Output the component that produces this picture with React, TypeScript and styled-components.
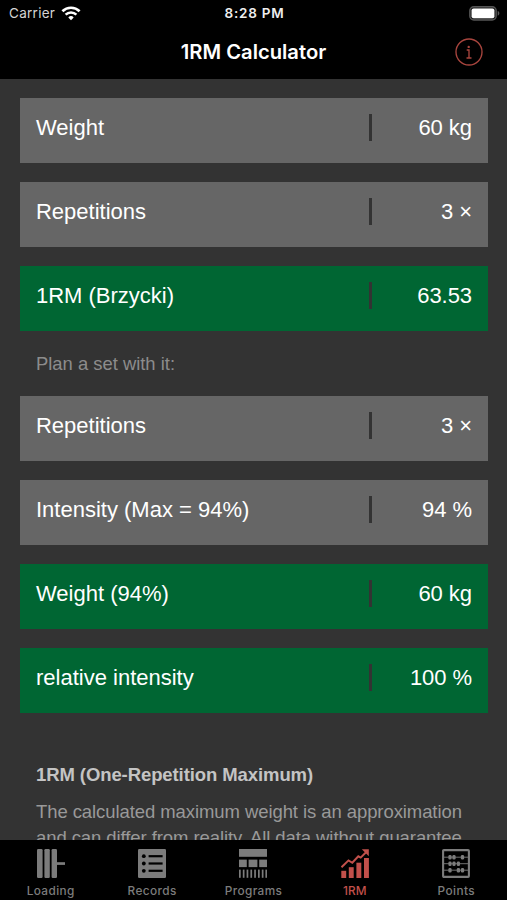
import React from "react";
import styled, { createGlobalStyle } from "styled-components";

const GlobalStyle = createGlobalStyle`
  * { box-sizing: border-box; }
  body { margin: 0; background: #000; }
`;

const Screen = styled.div`
  width: 507px;
  height: 900px;
  display: flex;
  flex-direction: column;
  overflow: hidden;
  background: #333;
  color: #fff;
  font-family: "Liberation Sans", Arial, sans-serif;
`;

const Header = styled.header`
  flex: none;
  height: 79px;
  background: #000;
  font-family: Inter, sans-serif;
`;

const StatusBar = styled.div`
  height: 27px;
  padding: 0 7px 0 9px;
  display: grid;
  grid-template-columns: 1fr auto 1fr;
  align-items: center;
  font-size: 13px;
  line-height: 27px;
`;

const Carrier = styled.div`
  display: flex;
  align-items: center;
  gap: 6px;
  color: #d4d4d4;
  font-size: 13.5px;
  letter-spacing: 0.28px;
`;

const Clock = styled.div`
  font-size: 13.5px;
  font-weight: 600;
  letter-spacing: 0.75px;
  color: #eee;
`;

const BatterySlot = styled.div`
  display: flex;
  justify-content: flex-end;
`;

const NavBar = styled.div`
  height: 50px;
  padding-right: 24px;
  display: grid;
  grid-template-columns: 52px 1fr 28px;
  align-items: center;
`;

const Title = styled.h1`
  margin: 0;
  text-align: center;
  font-size: 20.2px;
  font-weight: 600;
  line-height: 50px;
  letter-spacing: 0;
`;

const InfoButton = styled.button`
  padding: 0;
  border: 0;
  background: none;
  display: flex;
`;

const Content = styled.main`
  flex: 1;
  min-height: 0;
  overflow: hidden;
  padding: 18.6px 18.6px 0 19.6px;
`;

const Rows = styled.section`
  display: flex;
  flex-direction: column;
  gap: 18.7px;
`;

const Row = styled.div<{ $result?: boolean }>`
  height: 65.3px;
  padding: 16px 16.4px 0 16.4px;
  display: flex;
  align-items: flex-start;
  background: ${(p) => (p.$result ? "#006633" : "#666")};
  font-size: 22px;
  line-height: 28px;
`;

const Label = styled.span`
  flex: 1;
`;

const Divider = styled.span`
  width: 3px;
  height: 27px;
  background: #333;
`;

const Value = styled.span`
  width: 100.2px;
  text-align: right;
  letter-spacing: -0.05px;
`;

const Hint = styled.p`
  margin: 0;
  padding: 0 16.4px;
  height: 65px;
  font-size: 18.4px;
  line-height: 65px;
  color: #8c8c8c;
`;

const Notes = styled.section`
  padding: 48.4px 16.4px 0;
  font-size: 18.5px;
  line-height: 26px;
  color: #999;
`;

const NotesTitle = styled.h2`
  margin: 0 0 11px;
  font-size: 18.5px;
  line-height: 26px;
  letter-spacing: -0.09px;
  color: #c4c4c4;
`;

const NotesText = styled.p`
  margin: 0;
  white-space: nowrap;
  letter-spacing: -0.08px;
`;

const TabBar = styled.nav`
  flex: none;
  height: 60px;
  padding-top: 9px;
  display: grid;
  grid-template-columns: repeat(5, 1fr);
  background: #000;
  font-family: Inter, sans-serif;
`;

const Tab = styled.div<{ $active?: boolean }>`
  display: flex;
  flex-direction: column;
  align-items: center;
  gap: 6px;
  color: ${(p) => (p.$active ? "#c2504b" : "#7c7c7c")};
  font-size: 11.8px;
  font-weight: 500;
  line-height: 15px;
  letter-spacing: ${(p) => (p.$active ? "0.1px" : "0.4px")};
`;

const WifiIcon = () => (
  <svg width="20" height="15" viewBox="0 0 20 15" fill="none" stroke="#fff">
    <path d="M1.4 5.2a12.4 12.4 0 0 1 17.2 0" strokeWidth="2.7" />
    <path d="M4.6 8.7a7.8 7.8 0 0 1 10.8 0" strokeWidth="2.5" />
    <path d="M10 14.2l-2.7-2.8a3.8 3.8 0 0 1 5.4 0z" fill="#fff" stroke="none" />
  </svg>
);

const BatteryIcon = () => (
  <svg width="31" height="15" viewBox="0 0 31 15">
    <rect x="0.8" y="0.8" width="26.4" height="13.2" rx="4" fill="#222" stroke="#555" strokeWidth="1.4" />
    <rect x="2.6" y="2.6" width="22.8" height="9.6" rx="2" fill="#fff" />
    <path d="M28.7 5.1c2.2.7 2.2 4 0 4.7z" fill="#5a5a5a" />
  </svg>
);

const InfoIcon = () => (
  <svg width="28" height="28" viewBox="0 0 28 28" fill="none" stroke="#a8453e">
    <circle cx="14" cy="14" r="13" strokeWidth="1.35" />
    <circle cx="13.7" cy="8.9" r="1.2" fill="#a8453e" stroke="none" />
    <path d="M11.7 12h2.3v8M11.5 20h5" strokeWidth="1.35" />
  </svg>
);

const LoadingIcon = () => (
  <svg width="28" height="29" viewBox="0 0 28 29" fill="currentColor">
    <rect x="0" y="0" width="5.6" height="29" rx="1.2" />
    <rect x="7.4" y="0" width="5.4" height="29" rx="1.2" />
    <rect x="14.6" y="0" width="5.4" height="29" rx="1.2" />
    <rect x="19.5" y="13.2" width="8.5" height="2.7" />
  </svg>
);

const RecordsIcon = () => (
  <svg width="28" height="29" viewBox="0 0 28 29">
    <rect width="28" height="29" rx="1.2" fill="currentColor" />
    {[7.2, 14.5, 21.8].map((y) => (
      <g key={y}>
        <circle cx="5.8" cy={y} r="1.9" />
        <rect x="10.6" y={y - 1.1} width="14" height="2.2" />
      </g>
    ))}
  </svg>
);

const ProgramsIcon = () => (
  <svg width="28" height="29" viewBox="0 0 28 29" fill="currentColor">
    <rect width="28" height="7.8" />
    {[0, 9.6, 20.2].map((x, i) => (
      <rect key={x} x={x} y="10.6" width={i === 1 ? 8.8 : 7.8} height="7.5" />
    ))}
    {[0, 3.8, 7.6, 11.4, 15.2, 19, 22.8, 26.4].map((x) => (
      <rect key={x} x={x} y="20.6" width="1.7" height="8.2" />
    ))}
  </svg>
);

const ChartIcon = () => (
  <svg width="28" height="29" viewBox="0 0 28 29" fill="currentColor">
    <rect x="0.3" y="21.8" width="4.9" height="7.2" />
    <rect x="7.8" y="18.2" width="4.9" height="10.8" />
    <rect x="15.4" y="13.7" width="4.9" height="15.3" />
    <rect x="23" y="9" width="4.9" height="20" />
    <path d="M.5 18.2l7-6.8 3.8 2.4 6-6.5 2.4 1.3 5.6-5.6" fill="none" stroke="currentColor" strokeWidth="2" />
    <path d="M20.8.3h7v7z" />
  </svg>
);

const AbacusIcon = () => (
  <svg width="28" height="29" viewBox="0 0 28 29" fill="currentColor">
    <rect x="1.1" y="1.1" width="25.8" height="26.8" rx="0.8" fill="none" stroke="currentColor" strokeWidth="2.1" />
    <path d="M2 8.2h24M2 14.7h24M2 21.2h24" stroke="currentColor" strokeWidth="0.9" />
    {[
      [8, 8.2], [12, 8.2], [20.5, 8.2],
      [8, 14.7], [12, 14.7], [16.4, 14.7],
      [8, 21.2], [16.4, 21.2], [20.5, 21.2],
    ].map(([x, y]) => (
      <rect key={`${x}-${y}`} x={x - 1.6} y={y - 2.3} width="3.2" height="4.6" rx="1.3" />
    ))}
  </svg>
);

interface Entry {
  label: string;
  value: string;
  result?: boolean;
}

const maxEntries: Entry[] = [
  { label: "Weight", value: "60 kg" },
  { label: "Repetitions", value: "3 ×" },
  { label: "1RM (Brzycki)", value: "63.53", result: true },
];

const planEntries: Entry[] = [
  { label: "Repetitions", value: "3 ×" },
  { label: "Intensity (Max = 94%)", value: "94 %" },
  { label: "Weight (94%)", value: "60 kg", result: true },
  { label: "relative intensity", value: "100 %", result: true },
];

const tabs = [
  { label: "Loading", Icon: LoadingIcon },
  { label: "Records", Icon: RecordsIcon },
  { label: "Programs", Icon: ProgramsIcon },
  { label: "1RM", Icon: ChartIcon, active: true },
  { label: "Points", Icon: AbacusIcon },
];

const EntryList = ({ entries }: { entries: Entry[] }) => (
  <Rows>
    {entries.map((e) => (
      <Row key={e.label} $result={e.result}>
        <Label>{e.label}</Label>
        <Divider />
        <Value>{e.value}</Value>
      </Row>
    ))}
  </Rows>
);

export default function App() {
  return (
    <>
      <GlobalStyle />
      <Screen>
        <Header>
          <StatusBar>
            <Carrier>
              Carrier <WifiIcon />
            </Carrier>
            <Clock>8:28 PM</Clock>
            <BatterySlot>
              <BatteryIcon />
            </BatterySlot>
          </StatusBar>
          <NavBar>
            <span />
            <Title>1RM Calculator</Title>
            <InfoButton aria-label="Info">
              <InfoIcon />
            </InfoButton>
          </NavBar>
        </Header>
        <Content>
          <EntryList entries={maxEntries} />
          <Hint>Plan a set with it:</Hint>
          <EntryList entries={planEntries} />
          <Notes>
            <NotesTitle>1RM (One-Repetition Maximum)</NotesTitle>
            <NotesText>
              The calculated maximum weight is an approximation
              <br />
              and can differ from reality. All data without guarantee.
            </NotesText>
          </Notes>
        </Content>
        <TabBar>
          {tabs.map(({ label, Icon, active }) => (
            <Tab key={label} $active={active}>
              <Icon />
              {label}
            </Tab>
          ))}
        </TabBar>
      </Screen>
    </>
  );
}
